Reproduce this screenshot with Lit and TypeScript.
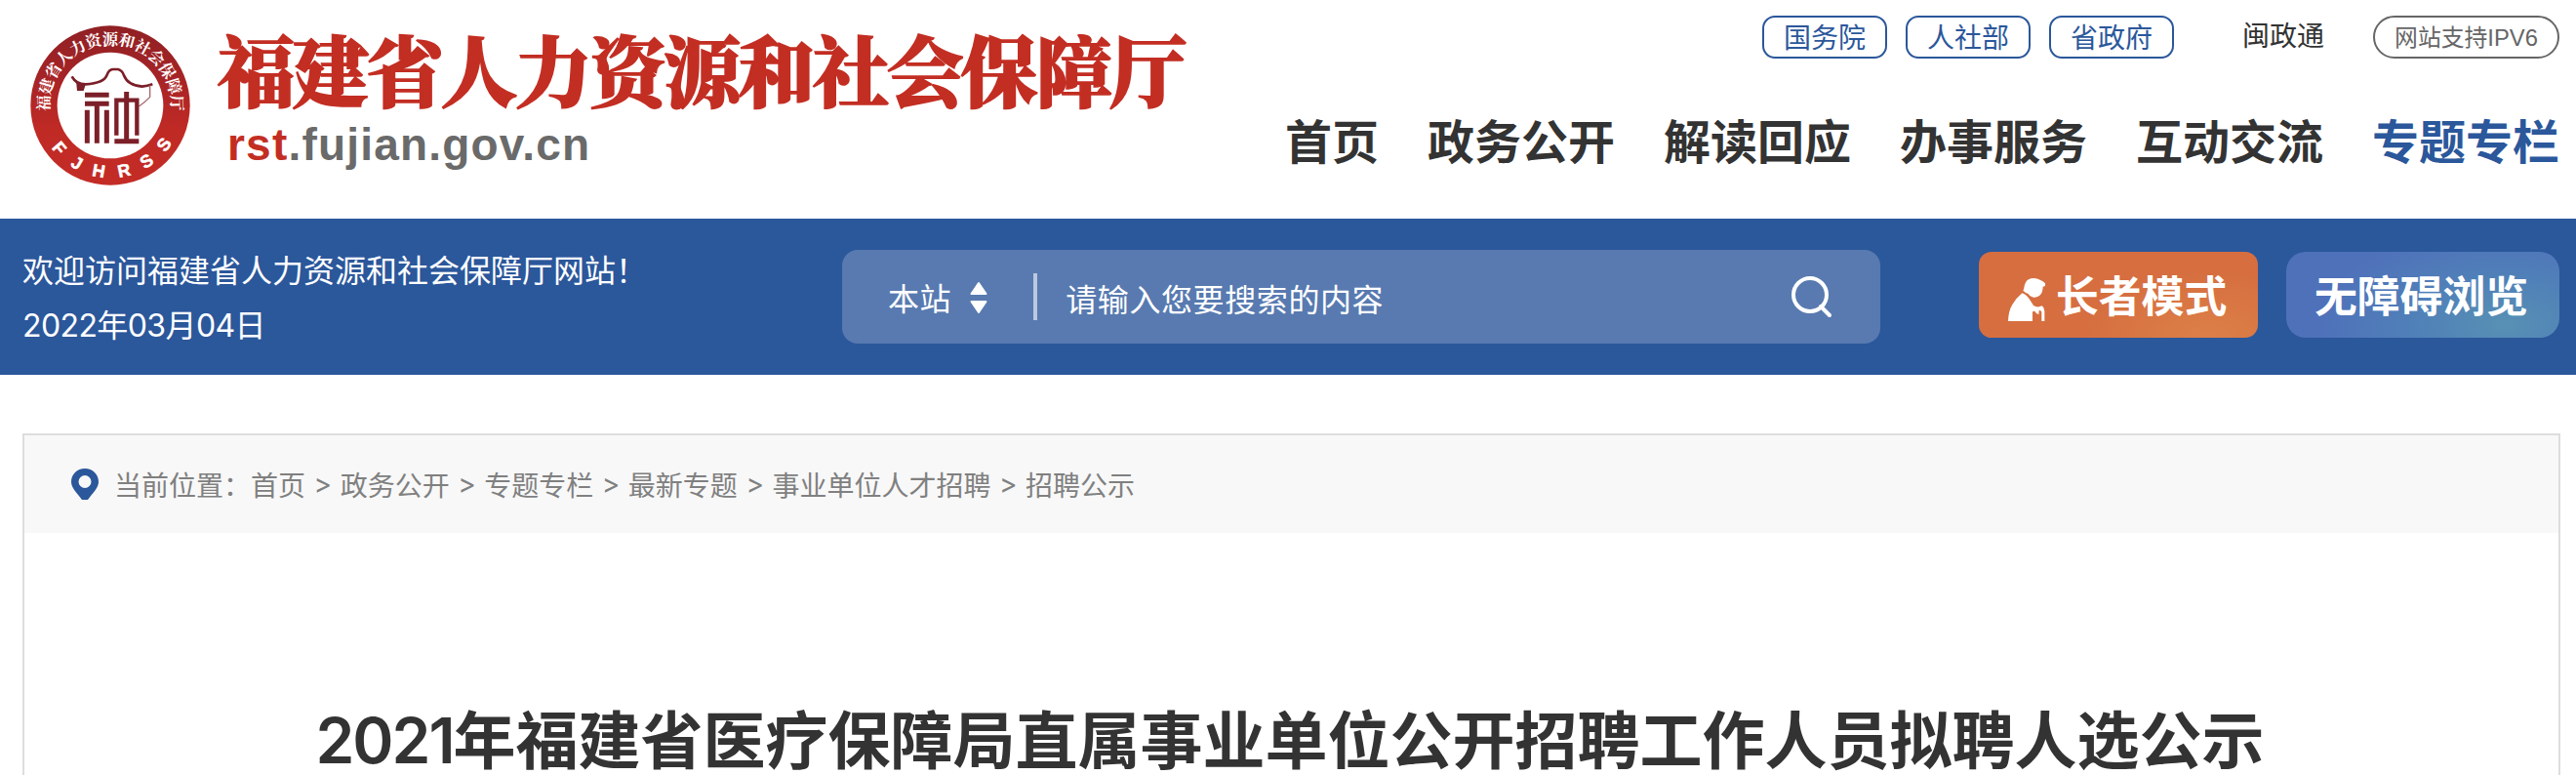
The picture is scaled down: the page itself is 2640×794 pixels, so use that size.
import { LitElement, html, svg, css } from 'lit';
import { customElement, property } from 'lit/decorators.js';
import { classMap } from 'lit/directives/class-map.js';

const RING_TOP = '福建省人力资源和社会保障厅';
const RING_BOTTOM: [string, number][] = [['F', 50], ['J', 30], ['H', 10], ['R', -12], ['S', -33], ['S', -54]];

@customElement('site-emblem')
class SiteEmblem extends LitElement {
  static styles = css`
    :host {
      display: block;
      width: 164px;
      height: 164px;
    }

    svg {
      display: block;
    }

    .ring-text {
      font: 700 49px "Noto Serif CJK SC", "Noto Sans CJK SC", sans-serif;
      fill: #fff;
      text-anchor: middle;
    }

    .ring-latin {
      font: bold 54px "Liberation Sans", sans-serif;
      fill: #fff;
      stroke: #fff;
      stroke-width: 1.5px;
      text-anchor: middle;
    }
  `;

  render() {
    const step = 176 / (RING_TOP.length - 1);
    return html`
      <svg width="164" height="164" viewBox="34 20 492 492">
        <defs>
          <linearGradient id="red" x1="0" y1="0" x2="0" y2="1">
            <stop offset="0" stop-color="#8f2024" />
            <stop offset="0.35" stop-color="#a82426" />
            <stop offset="0.65" stop-color="#c02a25" />
            <stop offset="1" stop-color="#c42c26" />
          </linearGradient>
        </defs>
        <circle cx="280" cy="266" r="245" fill="url(#red)" />
        <circle cx="280" cy="266" r="163" fill="#fff" />
        ${[...RING_TOP].map((ch, i) => svg`
          <text class="ring-text" x="280" y="79" transform="rotate(${-88 + i * step} 280 266)">${ch}</text>
        `)}
        ${RING_BOTTOM.map(([ch, angle]) => svg`
          <text class="ring-latin" x="280" y="489" transform="rotate(${angle} 280 266)">${ch}</text>
        `)}
        <g fill="none" stroke="#7c1f28">
          <path stroke-width="8" d="M162 177 Q174 200 204 201 Q262 198 270 172 Q276 156 288 155 L304 155 Q317 158 322 174 Q334 205 378 208 Q394 206 410 201" />
          <path stroke-width="4" stroke="#a5666c" d="M402 204 L402 240 Q386 257 368 269" />
          <path stroke="none" fill="#7c1f28" d="M164 178 L184 196 L204 202 L198 221 L178 221 L176 200 Z" />
          <path stroke-width="15" d="M202 234H276M202 261H276M209 280V382M239 261V382M269 280V382" />
          <path stroke-width="15" d="M330 224V376M293 376H368" />
          <path stroke-width="13" d="M299 358V250H362V358" />
        </g>
      </svg>
    `;
  }
}

@customElement('site-header')
class SiteHeader extends LitElement {
  @property({ type: Array }) portals = ['国务院', '人社部', '省政府'];
  @property({ type: Array }) nav = ['首页', '政务公开', '解读回应', '办事服务', '互动交流', '专题专栏'];
  @property() active = '专题专栏';

  static styles = css`
    :host {
      display: flex;
      justify-content: space-between;
      box-sizing: border-box;
      height: 224px;
      padding: 0 17px 0 31px;
      font-family: "Noto Sans CJK SC", sans-serif;
    }

    .brand {
      display: flex;
      padding-top: 26px;
      gap: 28px;
    }

    .name {
      font-family: "Noto Serif CJK SC", "Noto Sans CJK SC", sans-serif;
      font-size: 79px;
      font-weight: 900;
      line-height: 90px;
      letter-spacing: -2.8px;
      color: #c32e23;
      -webkit-text-stroke: 1.6px #c32e23;
      white-space: nowrap;
      margin-top: -1px;
    }

    .domain {
      font: bold 46px/50px "Liberation Sans", sans-serif;
      letter-spacing: 1.2px;
      color: #6a6a6a;
      padding: 8px 0 0 10px;
    }

    .domain b {
      color: #c32e23;
    }

    .right {
      display: flex;
      flex-direction: column;
      align-items: flex-end;
      padding-top: 16px;
    }

    .links {
      display: flex;
      height: 44px;
      font-size: 28px;
      line-height: 38px;
      color: #333;
    }

    .portal {
      box-sizing: border-box;
      width: 128px;
      margin-right: 19px;
      border: 2px solid #2b579b;
      border-radius: 13px;
      color: #2b579b;
      text-align: center;
    }

    .mzt {
      margin: 0 50px 0 51px;
      line-height: 38px;
    }

    .ipv6 {
      box-sizing: border-box;
      width: 191px;
      border: 2px solid #666;
      border-radius: 22px;
      font-family: "Liberation Sans", "Noto Sans CJK SC", sans-serif;
      font-size: 23.8px;
      line-height: 41px;
      color: #666;
      text-align: center;
      white-space: nowrap;
    }

    .nav {
      display: flex;
      gap: 50px;
      margin-top: 49px;
      font-size: 48px;
      font-weight: bold;
      line-height: 66px;
      color: #333;
    }

    .nav .on {
      color: #2b579b;
    }
  `;

  render() {
    return html`
      <div class="brand">
        <site-emblem></site-emblem>
        <div>
          <div class="name">福建省人力资源和社会保障厅</div>
          <div class="domain"><b>rst</b>.fujian.gov.cn</div>
        </div>
      </div>
      <div class="right">
        <div class="links">
          ${this.portals.map((p) => html`<span class="portal">${p}</span>`)}
          <span class="mzt">闽政通</span>
          <span class="ipv6">网站支持IPV6</span>
        </div>
        <div class="nav">
          ${this.nav.map((n) => html`<span class=${classMap({ on: n === this.active })}>${n}</span>`)}
        </div>
      </div>
    `;
  }
}

@customElement('search-bar')
class SearchBar extends LitElement {
  static styles = css`
    :host {
      display: flex;
      align-items: center;
      box-sizing: border-box;
      height: 160px;
      padding: 0 17px 0 23px;
      background: #2b579b;
      color: #fff;
      font-family: "Inter", "Noto Sans CJK SC", sans-serif;
      font-size: 32px;
    }

    svg {
      display: block;
      flex: none;
    }

    .welcome {
      width: 840px;
      line-height: 56px;
      padding-top: 3px;
    }

    .date {
      letter-spacing: -0.6px;
    }

    .search {
      display: flex;
      align-items: center;
      box-sizing: border-box;
      width: 1064px;
      height: 96px;
      padding: 0 48px 0 47px;
      border-radius: 16px;
      background: #587ab0;
      letter-spacing: 0.6px;
    }

    .arrows {
      margin: 2px 47px 0 19px;
    }

    .divider {
      width: 4px;
      height: 48px;
      margin-right: 29px;
      background: #bac8e0;
    }

    .hint {
      flex: 1;
      padding-top: 2px;
    }

    .btn {
      display: flex;
      align-items: center;
      box-sizing: border-box;
      height: 88px;
      margin-top: -4px;
      font-size: 43.8px;
      font-weight: bold;
      white-space: nowrap;
    }

    .elder {
      width: 286px;
      margin-left: 101px;
      padding-left: 30px;
      gap: 11px;
      border-radius: 13px;
      background: radial-gradient(ellipse 130px 70px at 82% 100%, #dc8047, #d66e40);
    }

    .elder svg {
      margin-top: 10px;
    }

    .barrier {
      width: 280px;
      margin-left: 29px;
      padding-left: 29px;
      border-radius: 20px;
      background: radial-gradient(ellipse 190px 100px at 80% 85%, #5790b4, #5080b8 50%, #4f71ba 100%);
    }

    .label {
      padding-bottom: 3px;
    }
  `;

  render() {
    return html`
      <div class="welcome">
        <div>欢迎访问福建省人力资源和社会保障厅网站！</div>
        <div class="date">2022年03月04日</div>
      </div>
      <div class="search">
        <span>本站</span>
        <svg class="arrows" width="18" height="34" viewBox="0 0 18 34">
          <path fill="#fff" stroke="#fff" stroke-width="2" stroke-linejoin="round" d="M9 2L16.5 13H1.5ZM9 32L16.5 21H1.5Z" />
        </svg>
        <span class="divider"></span>
        <span class="hint">请输入您要搜索的内容</span>
        <svg width="44" height="44" viewBox="0 0 44 44" fill="none" stroke="#fff" stroke-width="4">
          <circle cx="20" cy="20" r="17" />
          <path stroke-linecap="round" d="M31 32L40 41" />
        </svg>
      </div>
      <div class="btn elder">
        <svg width="38" height="44" viewBox="0 0 114 132">
          <g fill="#fff">
            <path d="M46 38Q49 34 50 24Q54 5 70 1Q86 -2 98 5Q108 8 114 16L114 24L107 26Q107 38 103 46Q94 60 80 59Q68 58 62 48Q54 46 46 38Z" />
            <path d="M0 132Q1 101 13 81Q24 62 43 46Q50 48 57 54Q66 64 78 84Q90 92 104 85Q112 90 112 101L112 132H103V105Q102 98 95 99L94 112Q84 107 82 101L75 103V132Z" />
          </g>
        </svg>
        <span class="label">长者模式</span>
      </div>
      <div class="btn barrier"><span class="label">无障碍浏览</span></div>
    `;
  }
}

@customElement('article-panel')
class ArticlePanel extends LitElement {
  @property({ type: Array }) crumbs = ['首页', '政务公开', '专题专栏', '最新专题', '事业单位人才招聘', '招聘公示'];

  static styles = css`
    :host {
      display: block;
      box-sizing: border-box;
      height: 350px;
      margin: 60px 16px 0 23px;
      border: 2px solid #ddd;
      border-bottom: none;
      font-family: "Inter", "Noto Sans CJK SC", sans-serif;
    }

    .crumbs {
      display: flex;
      align-items: center;
      height: 100px;
      padding-left: 48px;
      background: #f8f8f8;
      font-size: 28px;
      color: #808080;
    }

    .pin {
      margin-right: 16px;
    }

    .sep {
      width: 35.6px;
      text-align: center;
    }

    .title {
      margin: 0 3px 0 0;
      padding-top: 178px;
      font-size: 64px;
      font-weight: 700;
      line-height: 70px;
      color: #333;
      text-align: center;
      white-space: nowrap;
    }

    .year {
      font-weight: 600;
      letter-spacing: -2px;
    }
  `;

  render() {
    return html`
      <div class="crumbs">
        <svg class="pin" width="28" height="32" viewBox="0 0 28 32">
          <path fill="#2b579b" fill-rule="evenodd" d="M14 0C6 0 0 6 0 13.500C0 20 6 25 11 32H17C22 25 28 20 28 13.500C28 6 22 0 14 0ZM14 7A6.500 6.500 0 1 1 14 20A6.500 6.500 0 1 1 14 7Z" />
        </svg>
        <span>当前位置：</span>
        ${this.crumbs.map((c, i) => html`${i ? html`<span class="sep">&gt;</span>` : ''}<span>${c}</span>`)}
      </div>
      <h1 class="title"><span class="year">2021</span>年福建省医疗保障局直属事业单位公开招聘工作人员拟聘人选公示</h1>
    `;
  }
}

@customElement('app-root')
class AppRoot extends LitElement {
  static styles = css`
    :host {
      display: block;
      height: 794px;
      overflow: hidden;
      background: #fff;
    }
  `;

  render() {
    return html`
      <site-header></site-header>
      <search-bar></search-bar>
      <article-panel></article-panel>
    `;
  }
}
